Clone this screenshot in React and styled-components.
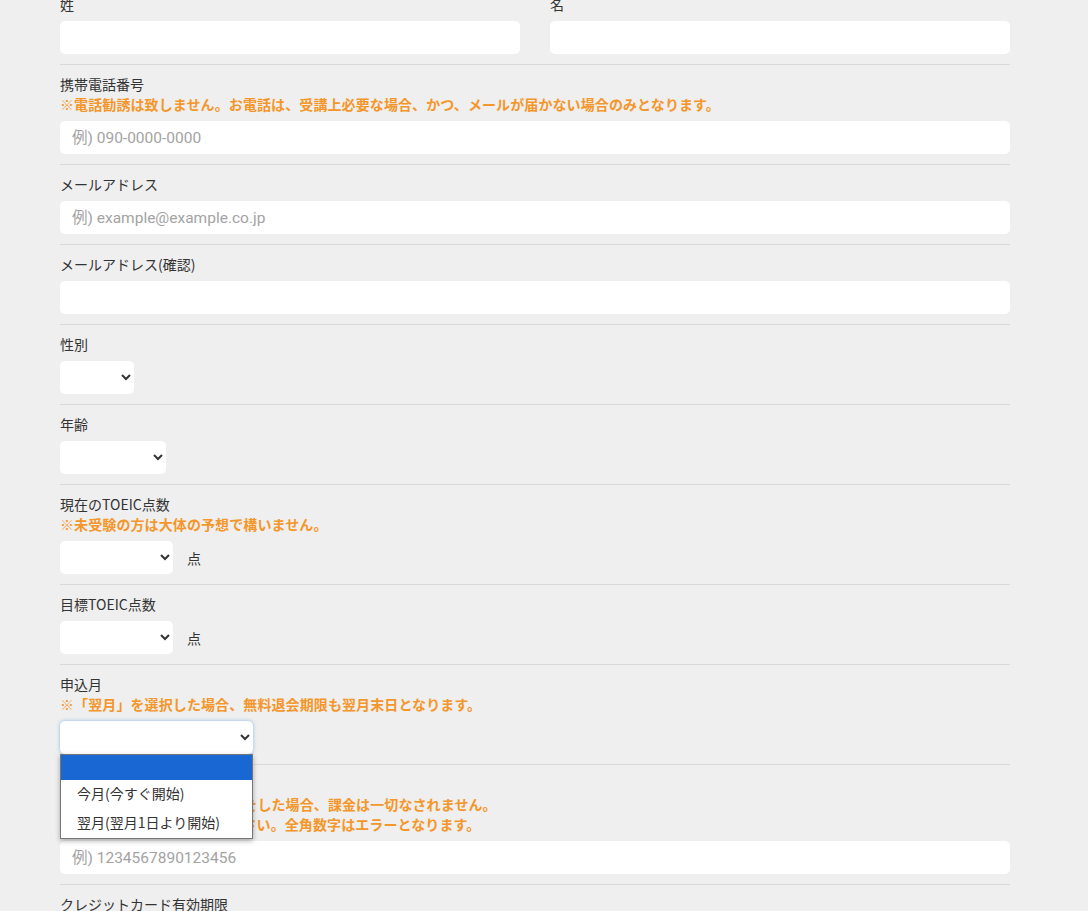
import React from 'react';
import styled, { createGlobalStyle } from 'styled-components';

const GlobalStyle = createGlobalStyle`
	html, body {
		margin: 0;
		padding: 0;
		background: #eeefee;
		overflow: hidden;
	}
	body {
		font-family: "Noto Sans CJK JP", "Noto Sans", sans-serif;
		color: #333;
	}
`;

const Form = styled.form`
	width: 950px;
	margin: -15px 0 0 60px;
`;

const Section = styled.div`
	padding: 9px 0 10px;
	border-bottom: 1px solid #d8d9d8;
`;

const Columns = styled.div`
	display: grid;
	grid-template-columns: 1fr 1fr;
	column-gap: 30px;
`;

const Label = styled.div`
	font-size: 14px;
	line-height: 20px;
	color: #333;
`;

const Note = styled.div`
	font-size: 14px;
	line-height: 20px;
	font-weight: 700;
	letter-spacing: 0.1px;
	color: #f4962a;
	white-space: nowrap;
`;

const Field = styled.div`
	display: flex;
	align-items: center;
	margin-top: 7px;
`;

const TextInput = styled.input`
	box-sizing: border-box;
	width: 100%;
	height: 33px;
	border: none;
	border-radius: 5px;
	background: #fff;
	padding: 0 12px;
	font-family: Roboto, "Noto Sans CJK JP", sans-serif;
	font-size: 15.5px;
	color: #333;
	outline: none;

	&::placeholder {
		color: #a3a3a3;
	}
`;

const SelectWrap = styled.div`
	position: relative;
`;

const Select = styled.select`
	box-sizing: border-box;
	width: ${(props) => props.$width}px;
	height: 33px;
	border: none;
	border-radius: 5px;
	background: #fff;
	font-family: "Noto Sans CJK JP", sans-serif;
	font-size: 14px;
	color: #333;
	outline: none;
	box-shadow: ${(props) => (props.$open ? '0 0 3px 1px rgba(110, 165, 230, 0.45)' : 'none')};
`;

const Unit = styled.span`
	margin-left: 14px;
	font-size: 14px;
	color: #333;
`;

const Menu = styled.ul`
	position: absolute;
	top: 33px;
	left: 0;
	z-index: 10;
	box-sizing: border-box;
	width: 193px;
	margin: 0;
	padding: 0;
	list-style: none;
	background: #fff;
	border: 1px solid #767676;
	box-shadow: 0 2px 5px rgba(0, 0, 0, 0.3);
`;

const Option = styled.li`
	height: ${(props) => (props.$blank ? 25 : 29)}px;
	line-height: ${(props) => (props.$blank ? 25 : 27)}px;
	padding-left: 16px;
	font-size: 14px;
	color: ${(props) => (props.$active ? '#fff' : '#333')};
	background: ${(props) => (props.$active ? '#1967d2' : '#fff')};
	white-space: nowrap;
`;

const App = () => {
	return (
		<>
			<GlobalStyle />
			<Form>
				<Section>
					<Columns>
						<div>
							<Label>姓</Label>
							<Field>
								<TextInput type="text" />
							</Field>
						</div>
						<div>
							<Label>名</Label>
							<Field>
								<TextInput type="text" />
							</Field>
						</div>
					</Columns>
				</Section>

				<Section>
					<Label>携帯電話番号</Label>
					<Note>※電話勧誘は致しません。お電話は、受講上必要な場合、かつ、メールが届かない場合のみとなります。</Note>
					<Field>
						<TextInput type="tel" placeholder="例) 090-0000-0000" />
					</Field>
				</Section>

				<Section>
					<Label>メールアドレス</Label>
					<Field>
						<TextInput type="email" placeholder="例) example@example.co.jp" />
					</Field>
				</Section>

				<Section>
					<Label>メールアドレス(確認)</Label>
					<Field>
						<TextInput type="email" />
					</Field>
				</Section>

				<Section>
					<Label>性別</Label>
					<Field>
						<Select $width={74}>
							<option value=""></option>
							<option>男性</option>
							<option>女性</option>
						</Select>
					</Field>
				</Section>

				<Section>
					<Label>年齢</Label>
					<Field>
						<Select $width={106}>
							<option value=""></option>
						</Select>
					</Field>
				</Section>

				<Section>
					<Label>現在のTOEIC点数</Label>
					<Note>※未受験の方は大体の予想で構いません。</Note>
					<Field>
						<Select $width={113}>
							<option value=""></option>
						</Select>
						<Unit>点</Unit>
					</Field>
				</Section>

				<Section>
					<Label>目標TOEIC点数</Label>
					<Field>
						<Select $width={113}>
							<option value=""></option>
						</Select>
						<Unit>点</Unit>
					</Field>
				</Section>

				<Section>
					<Label>申込月</Label>
					<Note>※「翌月」を選択した場合、無料退会期限も翌月末日となります。</Note>
					<Field>
						<SelectWrap>
							<Select $width={193} $open>
								<option value=""></option>
								<option>今月(今すぐ開始)</option>
								<option>翌月(翌月1日より開始)</option>
							</Select>
							<Menu>
								<Option $blank $active />
								<Option>今月(今すぐ開始)</Option>
								<Option>翌月(翌月1日より開始)</Option>
							</Menu>
						</SelectWrap>
					</Field>
				</Section>

				<Section>
					<Label>クレジットカード番号</Label>
					<Note>※無料期間中に退会の手続きをした場合、課金は一切なされません。</Note>
					<Note>※数字は半角で入力してください。全角数字はエラーとなります。</Note>
					<Field>
						<TextInput type="text" placeholder="例) 1234567890123456" />
					</Field>
				</Section>

				<Section>
					<Label>クレジットカード有効期限</Label>
					<Field>
						<Select $width={74}>
							<option value=""></option>
						</Select>
						<Unit>月</Unit>
					</Field>
				</Section>
			</Form>
		</>
	);
};

export default App;
